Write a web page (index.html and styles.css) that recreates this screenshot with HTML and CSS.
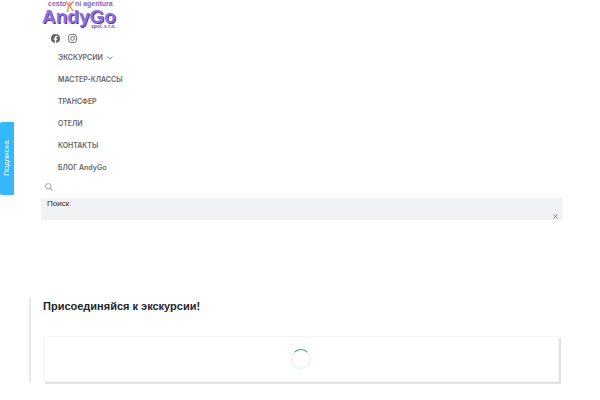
FILE: index.html
```html
<!DOCTYPE html>
<html lang="ru">
<head>
    <meta charset="UTF-8">
    <meta name="viewport" content="width=device-width, initial-scale=1.0">
    <title>AndyGo</title>
    <link rel="stylesheet" href="styles.css">
</head>
<body>
    <header class="container">
        <a class="logo" href="#">
            <svg width="76" height="30" viewBox="0 0 76 30" role="img" aria-label="AndyGo">
                <g class="logo-small">
                    <text x="6" y="6">cesto</text>
                    <text x="33" y="6">ní agentura</text>
                </g>
                <text class="logo-name" x="0" y="23">AndyGo</text>
                <text class="logo-firm" x="49" y="28">spol. s r.o.</text>
                <circle cx="28" cy="4" r="2" fill="#f0a878"/>
                <path d="M24 1l3 5 5-5M27 6l-2 6M28 6l3 5" fill="none" stroke="#e58b62" stroke-width="1.3"/>
            </svg>
        </a>
        <div class="social">
            <a href="#" aria-label="Facebook">
                <svg width="9" height="9" viewBox="0 0 16 16"><path fill="#606468" d="M16 8a8 8 0 1 0-9.2 7.9v-5.6h-2V8h2V6.2c0-2 1.2-3.1 3-3.1.9 0 1.8.2 1.8.2v2h-1c-1 0-1.3.6-1.3 1.2V8h2.2l-.4 2.3H9.3v5.6A8 8 0 0 0 16 8z"/></svg>
            </a>
            <a href="#" aria-label="Instagram">
                <svg width="9" height="9" viewBox="0 0 16 16" fill="none" stroke="#606468" stroke-width="1.6"><rect x="1" y="1" width="14" height="14" rx="4"/><circle cx="8" cy="8" r="3.3"/><circle cx="12" cy="4" r=".4"/></svg>
            </a>
        </div>
        <nav>
            <ul class="menu">
                <li><a href="#">ЭКСКУРСИИ <svg width="6" height="4" viewBox="0 0 6 4"><path d="M.5.5L3 3 5.5.5" fill="none" stroke="#888"/></svg></a></li>
                <li><a href="#">МАСТЕР-КЛАССЫ</a></li>
                <li><a href="#">ТРАНСФЕР</a></li>
                <li><a href="#">ОТЕЛИ</a></li>
                <li><a href="#">КОНТАКТЫ</a></li>
                <li><a href="#">БЛОГ AndyGo</a></li>
            </ul>
        </nav>
        <button class="search-btn" aria-label="Поиск">
            <svg width="8" height="8" viewBox="0 0 16 16" fill="none" stroke="#888" stroke-width="1.5"><circle cx="6.5" cy="6.5" r="5.5"/><path d="M10.5 10.5l5 5"/></svg>
        </button>
        <form class="search">
            <input type="text" placeholder="Поиск" aria-label="Поиск">
            <button type="button" aria-label="Закрыть">
                <svg width="5" height="5" viewBox="0 0 5 5"><path d="M.5.5l4 4M4.5.5l-4 4" stroke="#666" stroke-width=".8"/></svg>
            </button>
        </form>
    </header>

    <main class="join">
        <h1>Присоединяйся к экскурсии!</h1>
        <div class="widget">
            <div class="spinner"></div>
        </div>
    </main>

    <button class="subscribe">Подписка</button>
</body>
</html>
```

FILE: styles.css
```css
body {
    font-family: "Liberation Sans", Arial, sans-serif;
    font-size: 8px;
    margin: 0;
    padding-bottom: 18px;
    color: #212529;
    background: #fff;
}

button {
    font-family: inherit;
    border: none;
    background: none;
    padding: 0;
    cursor: pointer;
}

svg {
    display: block;
}

.container {
    margin: 0 37px 0 42px;
}

.logo {
    display: block;
    width: 76px;
}

.logo text {
    font-weight: bold;
}

.logo-small {
    font-size: 7px;
    fill: #8a5fc0;
}

.logo-name {
    font-size: 19px;
    fill: #9070e0;
    text-shadow: 1px 1px 0 #5a3f96;
}

.logo-firm {
    font-size: 5px;
    fill: #6a4aa8;
}

.social {
    display: flex;
    gap: 8px;
    padding: 4px 9px;
}

.menu {
    list-style: none;
    margin: 0;
    padding: 0 16px;
}

.menu a {
    display: flex;
    align-items: center;
    gap: 4px;
    line-height: 22px;
    font-family: Inter, "Liberation Sans", sans-serif;
    font-size: 7px;
    font-weight: 600;
    color: #666;
    text-decoration: none;
}

.search-btn {
    display: block;
    padding: 4px 3px 7px;
}

.search {
    display: flex;
    justify-content: space-between;
    align-items: flex-end;
    height: 22px;
    margin-left: -1px;
    background: #f1f2f3;
}

.search input {
    flex: 1;
    align-self: flex-start;
    border: none;
    background: none;
    padding: 1px 6px;
    font: 8px/10px "Liberation Sans", Arial, sans-serif;
}

.search input::placeholder {
    color: #212529;
}

.search button {
    padding: 1px 5px;
}

.join {
    margin: 78px 39px 0 29px;
    padding: 0 2px 0 12px;
    border-left: 2px solid #e6e6e6;
}

.join h1 {
    margin: 0 0 22px;
    font-size: 11px;
    line-height: 16px;
}

.widget {
    display: flex;
    justify-content: center;
    padding: 12px;
    border: 1px solid #f6f6f6;
    box-shadow: 2px 2px 0 #e2e2e2;
}

.spinner {
    width: 18px;
    height: 18px;
    border: 1px solid #d8eef5;
    border-top-color: #3a9cba;
    border-radius: 50%;
}

.subscribe {
    position: fixed;
    left: 0;
    top: 122px;
    height: 73px;
    width: 14px;
    border-radius: 0 2px 2px 0;
    background: #35b8fb;
    color: #fff;
    font-size: 8px;
    writing-mode: vertical-rl;
    transform: rotate(180deg);
}
```
